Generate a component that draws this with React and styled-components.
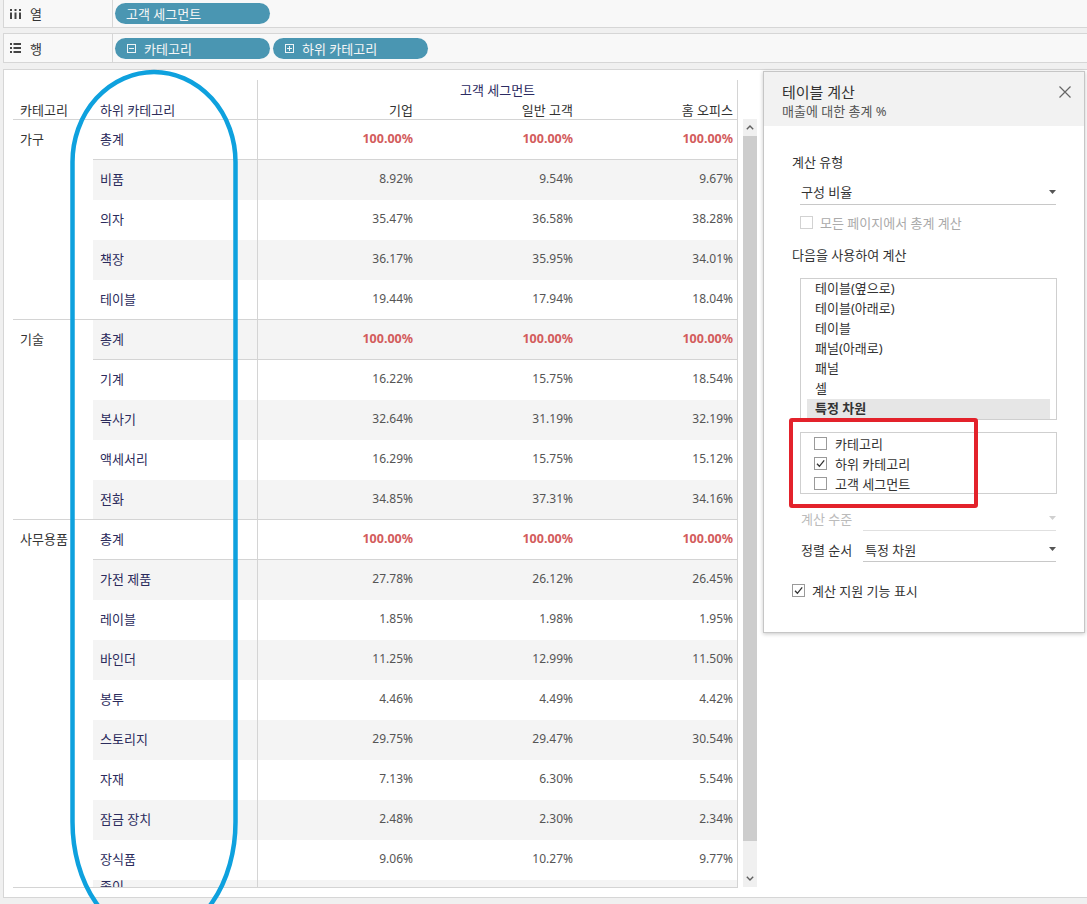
import React from 'react';
import styled, { createGlobalStyle } from 'styled-components';

const FONT = `"Noto Sans", "Noto Sans CJK KR", sans-serif`;

const GlobalStyle = createGlobalStyle`
  html, body { margin: 0; padding: 0; }
  body {
    background: #f0f0f0;
    font-family: ${FONT};
    font-size: 13px;
    color: #333;
    width: 1087px;
    height: 904px;
    overflow: hidden;
  }
  * { box-sizing: border-box; }
`;

const Page = styled.div`
  position: relative;
  width: 1087px;
  height: 904px;
  overflow: hidden;
  display: flex;
  flex-direction: column;
`;

/* ---------- shelves ---------- */
const Shelf = styled.div`
  display: flex;
  height: ${p => p.$h}px;
  margin: ${p => p.$mt}px 0 0 3px;
  background: #f8f8f8;
  border-left: 1px solid #d6d6d6;
  border-bottom: 1px solid #d6d6d6;
  border-top: ${p => (p.$top ? '1px solid #d6d6d6' : 'none')};
`;

const ShelfLabel = styled.div`
  width: 109px;
  flex-shrink: 0;
  display: flex;
  align-items: center;
  gap: 9px;
  padding-left: 6px;
  border-right: 1px solid #d6d6d6;
  font-size: 13px;
  color: #333;
`;

const PillArea = styled.div`
  display: flex;
  align-items: center;
  gap: 3px;
  padding-left: 2px;
`;

const Pill = styled.div`
  width: 155px;
  height: 21px;
  border-radius: 11px;
  background: #4a96b2;
  color: #f6f6f6;
  font-size: 13px;
  display: flex;
  align-items: center;
  gap: 8px;
  padding-left: ${p => p.$pl}px;
  white-space: nowrap;
`;

/* ---------- view ---------- */
const View = styled.div`
  position: relative;
  margin: 6px 0 0 3px;
  width: 1086px;
  height: 829px;
  flex-shrink: 0;
  background: #fff;
  border: 1px solid #d6d6d6;
  display: flex;
  align-items: flex-start;
  padding-left: 9px;
`;

const TableBlock = styled.div`
  display: flex;
  padding-top: 10px;
`;

const Table = styled.div`
  width: 725px;
  display: flex;
  flex-direction: column;
  border-right: 1px solid #d4d4d4;
`;

const HeaderTop = styled.div`
  display: grid;
  grid-template-columns: 244px 480px;
  height: 20px;
`;

const HeaderBottom = styled.div`
  display: grid;
  grid-template-columns: 80px 164px 160px 160px 160px;
  height: 20px;
  border-bottom: 1px solid #d4d4d4;
`;

const SegmentHead = styled.div`
  border-left: 1px solid #d4d4d4;
  display: flex;
  align-items: center;
  justify-content: center;
  padding-bottom: 7px;
  color: #2b2b62;
  font-size: 13px;
`;

const HeadCell = styled.div`
  display: flex;
  align-items: center;
  padding-bottom: 7px;
  padding-left: ${p => (p.$right ? 0 : 7)}px;
  padding-right: ${p => (p.$right ? 4 : 0)}px;
  justify-content: ${p => (p.$right ? 'flex-end' : 'flex-start')};
  border-left: ${p => (p.$line ? '1px solid #d4d4d4' : 'none')};
  color: ${p => p.$color || '#333'};
  font-size: 13px;
  white-space: nowrap;
`;

const Body = styled.div`
  height: 768px;
  overflow: hidden;
  border-bottom: 1px solid #d4d4d4;
`;

const Group = styled.div`
  display: flex;
`;

const CatCell = styled.div`
  width: 80px;
  flex-shrink: 0;
  padding-left: 7px;
  box-shadow: inset 0 -1px 0 #d4d4d4;
`;

const CatText = styled.div`
  height: 40px;
  display: flex;
  align-items: center;
  padding-bottom: 4px;
  color: #333;
  font-size: 13px;
  white-space: nowrap;
`;

const Rows = styled.div`
  width: 644px;
  display: flex;
  flex-direction: column;
`;

const Row = styled.div`
  display: grid;
  grid-template-columns: 164px 160px 160px 160px;
  height: 40px;
  background: ${p => (p.$band ? '#f4f4f4' : '#fff')};
  box-shadow: ${p => (p.$line ? 'inset 0 -1px 0 #d4d4d4' : 'none')};
`;

const SubCell = styled.div`
  display: flex;
  align-items: ${p => (p.$clip ? 'flex-start' : 'center')};
  padding-left: 7px;
  padding-bottom: ${p => (p.$clip ? 0 : 4)}px;
  padding-top: ${p => (p.$clip ? 1 : 0)}px;
  line-height: ${p => (p.$clip ? '10px' : 'normal')};
  color: #2b2b5c;
  font-size: 13px;
  white-space: nowrap;
`;

const ValCell = styled.div`
  display: flex;
  align-items: center;
  justify-content: flex-end;
  padding-right: 4px;
  padding-bottom: 4px;
  border-left: ${p => (p.$line ? '1px solid #d4d4d4' : 'none')};
  color: ${p => (p.$total ? '#d35c5c' : '#555')};
  font-weight: ${p => (p.$total ? 700 : 400)};
  font-size: ${p => (p.$total ? '12.5px' : '12px')};
`;

/* scrollbar */
const Scrollbar = styled.div`
  margin: 39px 0 0 5px;
  width: 14px;
  height: 768px;
  background: #f0f0f0;
  display: flex;
  flex-direction: column;
`;

const ScrollBtn = styled.div`
  height: 17px;
  display: flex;
  align-items: center;
  justify-content: center;
`;

const Thumb = styled.div`
  height: 705px;
  background: #cdcdcd;
`;

const Spacer = styled.div`
  flex: 1;
`;

/* ---------- dialog ---------- */
const Dialog = styled.div`
  position: relative;
  width: 322px;
  height: 562px;
  margin: 1px 0 0 6px;
  background: #fff;
  border: 1px solid #c6c6c6;
  box-shadow: 0 1px 4px rgba(0, 0, 0, 0.22);
  display: flex;
  flex-direction: column;
`;

const DialogHeader = styled.div`
  background: #f2f2f2;
  display: flex;
  justify-content: space-between;
  padding: 10px 13px 6px 18px;
`;

const TitleBlock = styled.div`
  display: flex;
  flex-direction: column;
`;

const Title = styled.div`
  font-size: 15px;
  line-height: 20px;
  color: #333;
`;

const Subtitle = styled.div`
  font-size: 13px;
  line-height: 18px;
  color: #555;
`;

const CloseBtn = styled.div`
  margin-top: 4px;
  width: 12px;
  height: 12px;
  display: flex;
`;

const DialogBody = styled.div`
  display: flex;
  flex-direction: column;
  padding-left: 28px;
`;

const SectionLabel = styled.div`
  margin-top: ${p => p.$mt}px;
  line-height: 18px;
  font-size: 13px;
  color: #333;
`;

const Dropdown = styled.div`
  margin: 9px 0 0 8px;
  width: 256px;
  height: 25px;
  border-bottom: 1px solid #c8c8c8;
  display: flex;
  align-items: center;
  justify-content: space-between;
  padding-left: 1px;
  padding-bottom: 1px;
  font-size: 13px;
  color: #333;
`;

const CheckRow = styled.div`
  margin: ${p => p.$mt}px 0 0 ${p => p.$ml}px;
  height: ${p => p.$h || 18}px;
  display: flex;
  align-items: center;
  gap: ${p => p.$gap || 7}px;
  font-size: 13px;
  color: ${p => (p.$disabled ? '#aaa' : '#333')};
  white-space: nowrap;
`;

const Box = styled.span`
  width: 13px;
  height: 13px;
  flex-shrink: 0;
  border: 1px solid ${p => (p.$disabled ? '#d2d2d2' : '#9a9a9a')};
  background: #fff;
  display: flex;
  align-items: center;
  justify-content: center;
`;

const ListBox = styled.div`
  margin: 14px 0 0 8px;
  width: 257px;
  height: 142px;
  border: 1px solid #cfcfcf;
  padding: 0 6px;
  display: flex;
  flex-direction: column;
`;

const ListItem = styled.div`
  height: 20px;
  line-height: 19px;
  padding-left: 8px;
  font-size: 13px;
  color: #333;
  background: ${p => (p.$selected ? '#e6e6e6' : 'transparent')};
  font-weight: ${p => (p.$selected ? 700 : 400)};
  white-space: nowrap;
`;

const DimBox = styled.div`
  margin: 12px 0 0 8px;
  width: 257px;
  height: 62px;
  border: 1px solid #cfcfcf;
  padding-left: 13px;
  display: flex;
  flex-direction: column;
`;

const FieldRow = styled.div`
  margin: ${p => p.$mt}px 0 0 9px;
  height: 24px;
  display: flex;
  align-items: center;
`;

const FieldLabel = styled.div`
  width: 62px;
  flex-shrink: 0;
  font-size: 13px;
  padding-bottom: 1px;
  color: ${p => (p.$disabled ? '#bbb' : '#333')};
  white-space: nowrap;
`;

const FieldSelect = styled.div`
  width: 193px;
  height: 24px;
  border-bottom: 1px solid ${p => (p.$disabled ? '#e0e0e0' : '#c8c8c8')};
  display: flex;
  align-items: center;
  justify-content: space-between;
  padding-left: 2px;
  padding-bottom: 1px;
  font-size: 13px;
  color: #333;
`;

const Highlight = styled.div`
  position: absolute;
  left: 25px;
  top: 346px;
  width: 189px;
  height: 90px;
  border: 4px solid #e3222b;
  border-radius: 3px;
  pointer-events: none;
`;

const Annotation = styled.svg`
  position: absolute;
  left: 0;
  top: 0;
  pointer-events: none;
`;

/* ---------- icons ---------- */
const ColumnsIcon = () => (
  <svg width="11" height="10" viewBox="0 0 11 10">
    <g fill="#444">
      {[0, 4.5, 9].map(x => (
        <React.Fragment key={x}>
          <rect x={x} y="0" width="2" height="2" />
          <rect x={x} y="3.5" width="2" height="6.5" />
        </React.Fragment>
      ))}
    </g>
  </svg>
);

const RowsIcon = () => (
  <svg width="11" height="10" viewBox="0 0 11 10">
    <g fill="#444">
      {[0, 4, 8].map(y => (
        <React.Fragment key={y}>
          <rect x="0" y={y} width="2" height="2" />
          <rect x="3.5" y={y} width="7.5" height="2" />
        </React.Fragment>
      ))}
    </g>
  </svg>
);

const PillBoxIcon = ({ plus }) => (
  <svg width="9" height="9" viewBox="0 0 9 9">
    <rect x="0.5" y="0.5" width="8" height="8" fill="none" stroke="#eef4f7" strokeWidth="1" />
    <line x1="2" y1="4.5" x2="7" y2="4.5" stroke="#eef4f7" strokeWidth="1" />
    {plus && <line x1="4.5" y1="2" x2="4.5" y2="7" stroke="#eef4f7" strokeWidth="1" />}
  </svg>
);

const Check = () => (
  <svg width="11" height="11" viewBox="0 0 11 11">
    <path d="M2 5.8 L4.4 8.3 L9.2 2.4" fill="none" stroke="#333" strokeWidth="1.3" />
  </svg>
);

const Caret = ({ light }) => (
  <svg width="7" height="4" viewBox="0 0 7 4">
    <path d="M0 0 L7 0 L3.5 4 Z" fill={light ? '#d0d0d0' : '#555'} />
  </svg>
);

const CloseIcon = () => (
  <svg width="12" height="12" viewBox="0 0 12 12">
    <path d="M0.5 0.5 L11.5 11.5 M11.5 0.5 L0.5 11.5" stroke="#666" strokeWidth="1.2" fill="none" />
  </svg>
);

const Chevron = ({ down }) => (
  <svg width="8" height="5" viewBox="0 0 8 5">
    <path
      d={down ? 'M0.8 0.8 L4 4 L7.2 0.8' : 'M0.8 4.2 L4 1 L7.2 4.2'}
      fill="none"
      stroke="#606060"
      strokeWidth="1.4"
    />
  </svg>
);

/* ---------- data ---------- */
const T = ['100.00%', '100.00%', '100.00%'];
const groups = [
  {
    cat: '가구',
    rows: [
      ['총계', T, true],
      ['비품', ['8.92%', '9.54%', '9.67%']],
      ['의자', ['35.47%', '36.58%', '38.28%']],
      ['책장', ['36.17%', '35.95%', '34.01%']],
      ['테이블', ['19.44%', '17.94%', '18.04%']],
    ],
  },
  {
    cat: '기술',
    rows: [
      ['총계', T, true],
      ['기계', ['16.22%', '15.75%', '18.54%']],
      ['복사기', ['32.64%', '31.19%', '32.19%']],
      ['액세서리', ['16.29%', '15.75%', '15.12%']],
      ['전화', ['34.85%', '37.31%', '34.16%']],
    ],
  },
  {
    cat: '사무용품',
    rows: [
      ['총계', T, true],
      ['가전 제품', ['27.78%', '26.12%', '26.45%']],
      ['레이블', ['1.85%', '1.98%', '1.95%']],
      ['바인더', ['11.25%', '12.99%', '11.50%']],
      ['봉투', ['4.46%', '4.49%', '4.42%']],
      ['스토리지', ['29.75%', '29.47%', '30.54%']],
      ['자재', ['7.13%', '6.30%', '5.54%']],
      ['잠금 장치', ['2.48%', '2.30%', '2.34%']],
      ['장식품', ['9.06%', '10.27%', '9.77%']],
      ['종이', null],
    ],
  },
];

const listItems = ['테이블(옆으로)', '테이블(아래로)', '테이블', '패널(아래로)', '패널', '셀', '특정 차원'];
const dims = [
  ['카테고리', false],
  ['하위 카테고리', true],
  ['고객 세그먼트', false],
];

export default function App() {
  let idx = 0;
  return (
    <>
      <GlobalStyle />
      <Page>
        <Shelf $h={28} $mt={0}>
          <ShelfLabel>
            <ColumnsIcon />
            <span>열</span>
          </ShelfLabel>
          <PillArea>
            <Pill $pl={11}>고객 세그먼트</Pill>
          </PillArea>
        </Shelf>
        <Shelf $h={30} $mt={5} $top>
          <ShelfLabel>
            <RowsIcon />
            <span>행</span>
          </ShelfLabel>
          <PillArea>
            <Pill $pl={12}>
              <PillBoxIcon />
              카테고리
            </Pill>
            <Pill $pl={12}>
              <PillBoxIcon plus />
              하위 카테고리
            </Pill>
          </PillArea>
        </Shelf>

        <View>
          <TableBlock>
            <Table>
              <HeaderTop>
                <div />
                <SegmentHead>고객 세그먼트</SegmentHead>
              </HeaderTop>
              <HeaderBottom>
                <HeadCell>카테고리</HeadCell>
                <HeadCell $color="#2e2e5a">하위 카테고리</HeadCell>
                <HeadCell $right $line>기업</HeadCell>
                <HeadCell $right>일반 고객</HeadCell>
                <HeadCell $right>홈 오피스</HeadCell>
              </HeaderBottom>
              <Body>
                {groups.map(g => (
                  <Group key={g.cat}>
                    <CatCell>
                      <CatText>{g.cat}</CatText>
                    </CatCell>
                    <Rows>
                      {g.rows.map(([name, vals, total], i) => {
                        const band = idx % 2 === 1;
                        idx += 1;
                        const last = i === g.rows.length - 1;
                        return (
                          <Row key={name} $band={band} $line={total || last}>
                            <SubCell $clip={!vals}>{name}</SubCell>
                            {[0, 1, 2].map(c => (
                              <ValCell key={c} $line={c === 0} $total={total}>
                                {vals ? vals[c] : ''}
                              </ValCell>
                            ))}
                          </Row>
                        );
                      })}
                    </Rows>
                  </Group>
                ))}
              </Body>
            </Table>
            <Scrollbar>
              <ScrollBtn>
                <Chevron />
              </ScrollBtn>
              <Thumb />
              <Spacer />
              <ScrollBtn>
                <Chevron down />
              </ScrollBtn>
            </Scrollbar>
          </TableBlock>

          <Dialog>
            <DialogHeader>
              <TitleBlock>
                <Title>테이블 계산</Title>
                <Subtitle>매출에 대한 총계 %</Subtitle>
              </TitleBlock>
              <CloseBtn>
                <CloseIcon />
              </CloseBtn>
            </DialogHeader>
            <DialogBody>
              <SectionLabel $mt={27}>계산 유형</SectionLabel>
              <Dropdown>
                <span>구성 비율</span>
                <Caret />
              </Dropdown>
              <CheckRow $mt={8} $ml={8} $disabled>
                <Box $disabled />
                <span>모든 페이지에서 총계 계산</span>
              </CheckRow>
              <SectionLabel $mt={15}>다음을 사용하여 계산</SectionLabel>
              <ListBox>
                {listItems.map(t => (
                  <ListItem key={t} $selected={t === '특정 차원'}>
                    {t}
                  </ListItem>
                ))}
              </ListBox>
              <DimBox>
                {dims.map(([t, on]) => (
                  <CheckRow key={t} $mt={0} $ml={0} $h={20} $gap={8}>
                    <Box>{on && <Check />}</Box>
                    <span>{t}</span>
                  </CheckRow>
                ))}
              </DimBox>
              <FieldRow $mt={13}>
                <FieldLabel $disabled>계산 수준</FieldLabel>
                <FieldSelect $disabled>
                  <span />
                  <Caret light />
                </FieldSelect>
              </FieldRow>
              <FieldRow $mt={7}>
                <FieldLabel>정렬 순서</FieldLabel>
                <FieldSelect>
                  <span>특정 차원</span>
                  <Caret />
                </FieldSelect>
              </FieldRow>
              <CheckRow $mt={19} $ml={0}>
                <Box>
                  <Check />
                </Box>
                <span>계산 지원 기능 표시</span>
              </CheckRow>
            </DialogBody>
            <Highlight />
          </Dialog>
        </View>

        <Annotation width="1087" height="904" viewBox="0 0 1087 904">
          <path
            d="M72.5 162 A81.5 90 0 0 1 235.5 162 L235.5 822 A81.5 115 0 0 1 72.5 822 Z"
            fill="none"
            stroke="#0ea1de"
            strokeWidth="4.5"
          />
        </Annotation>
      </Page>
    </>
  );
}
